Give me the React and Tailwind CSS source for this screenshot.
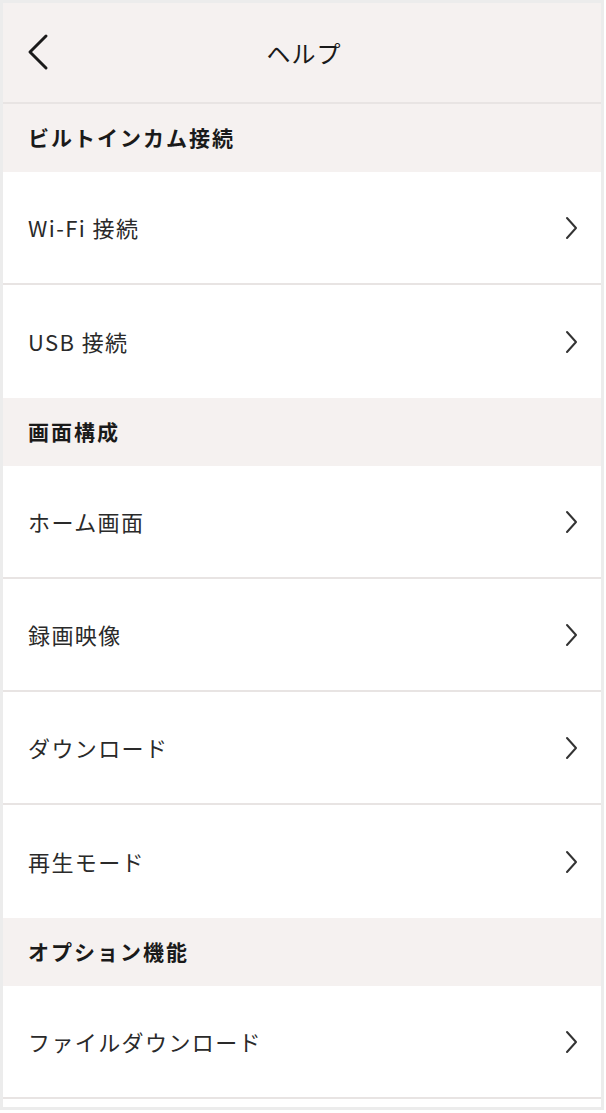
const sections = [
  { title: 'ビルトインカム接続', items: ['Wi-Fi 接続', 'USB 接続'] },
  { title: '画面構成', items: ['ホーム画面', '録画映像', 'ダウンロード', '再生モード'] },
  { title: 'オプション機能', items: ['ファイルダウンロード'] },
];

const font = { fontFamily: '"Noto Sans CJK JP", "Noto Sans", sans-serif' };

export default function App() {
  return (
    <div className="w-[606px] h-[1113px] bg-white" style={font}>
      <div className="w-[604px] border-[3px] border-[#ececec] bg-white">
        {/* Header */}
        <div className="relative h-[101px] bg-[#f5f1f0] border-b-2 border-[#e8e4e3] flex items-center justify-center">
          <button className="absolute left-[17px] top-[29px] text-[#1a1a1a]" aria-label="back">
            <svg width="36" height="40" viewBox="0 0 36 40" fill="none">
              <path d="M26 4 L10 20 L26 36" stroke="currentColor" strokeWidth="3" strokeLinecap="round" strokeLinejoin="round" />
            </svg>
          </button>
          <h1 className="text-[24px] font-normal text-[#1a1a1a] tracking-[1px] pl-[4px]">ヘルプ</h1>
        </div>

        {sections.map((section, si) => (
          <div key={section.title}>
            <div className="h-[68px] bg-[#f5f1f0] flex items-center pl-[25px]">
              <span className="text-[21px] font-bold text-[#1a1a1a] tracking-[2px]">{section.title}</span>
            </div>
            {section.items.map((item, i) => {
              const last = i === section.items.length - 1;
              const border = !last || si === sections.length - 1;
              return (
                <div
                  key={item}
                  className={
                    border
                      ? 'h-[113px] border-b-2 border-[#e8e4e3] flex items-center justify-between pl-[25px] pr-[20px]'
                      : 'h-[113px] flex items-center justify-between pl-[25px] pr-[20px]'
                  }
                >
                  <span className="text-[22px] text-[#2a2a2a] tracking-[1.4px]">{item}</span>
                  <svg width="20" height="26" viewBox="0 0 20 26" fill="none" className="text-[#333]">
                    <path d="M6 3 L15 13 L6 23" stroke="currentColor" strokeWidth="2" strokeLinecap="round" strokeLinejoin="round" />
                  </svg>
                </div>
              );
            })}
          </div>
        ))}
        <div className="h-[8px]" />
      </div>
    </div>
  );
}
